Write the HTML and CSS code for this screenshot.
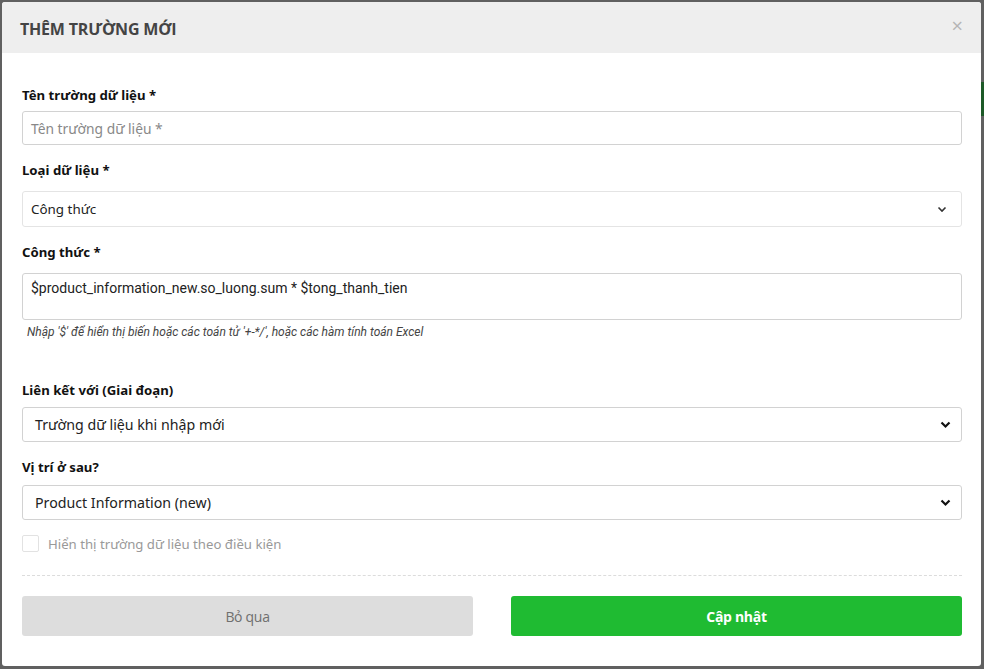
FILE: index.html
```html
<!DOCTYPE html>
<html lang="vi">
<head>
<meta charset="utf-8">
<link rel="stylesheet" href="styles.css">
</head>
<body>
<div class="backdrop-accent"></div>
<div class="modal">
  <div class="modal-header">
    <h1 class="modal-title">THÊM TRƯỜNG MỚI</h1>
    <span class="close">×</span>
  </div>
  <div class="modal-body">
    <div class="field">
      <label class="label label-first">Tên trường dữ liệu *</label>
      <div class="input placeholder">Tên trường dữ liệu *</div>
    </div>
    <div class="field">
      <label class="label">Loại dữ liệu *</label>
      <div class="input select-soft">
        <span>Công thức</span>
        <svg class="chev-soft" width="10" height="7" viewBox="0 0 10 7"><path d="M1.5 1.5 L5 5 L8.5 1.5" fill="none" stroke="#333" stroke-width="1.6"/></svg>
      </div>
    </div>
    <div class="field">
      <label class="label">Công thức *</label>
      <div class="input textarea">$product_information_new.so_luong.sum * $tong_thanh_tien</div>
      <p class="hint">Nhập '$' để hiển thị biến hoặc các toán tử '+-*/', hoặc các hàm tính toán Excel</p>
    </div>
    <div class="field field-gap">
      <label class="label">Liên kết với (Giai đoạn)</label>
      <div class="input select-native">
        <span>Trường dữ liệu khi nhập mới</span>
        <svg class="chev" width="11" height="8" viewBox="0 0 11 8"><path d="M1.5 1.5 L5.5 5.5 L9.5 1.5" fill="none" stroke="#111" stroke-width="2.2"/></svg>
      </div>
    </div>
    <div class="field">
      <label class="label label-pos">Vị trí ở sau?</label>
      <div class="input select-native">
        <span>Product Information (new)</span>
        <svg class="chev" width="11" height="8" viewBox="0 0 11 8"><path d="M1.5 1.5 L5.5 5.5 L9.5 1.5" fill="none" stroke="#111" stroke-width="2.2"/></svg>
      </div>
    </div>
    <div class="check-row">
      <span class="checkbox"></span>
      <span class="check-label">Hiển thị trường dữ liệu theo điều kiện</span>
    </div>
    <div class="divider"></div>
    <div class="actions">
      <button class="btn btn-cancel">Bỏ qua</button>
      <button class="btn btn-primary">Cập nhật</button>
    </div>
  </div>
</div>
</body>
</html>
```
FILE: styles.css
```css
* { box-sizing: border-box; }
html, body { margin: 0; padding: 0; }
body {
  width: 984px;
  height: 669px;
  background: #606060;
  padding: 2px 3px 3px 2px;
  position: relative;
  overflow: hidden;
  font-family: "Noto Sans", "Open Sans", sans-serif;
}
.backdrop-accent {
  position: absolute;
  right: 0;
  top: 82px;
  width: 3px;
  height: 34px;
  background: #1d5a28;
}
.modal {
  width: 979px;
  height: 664px;
  background: #fff;
  border-radius: 3px;
  overflow: hidden;
  display: flex;
  flex-direction: column;
}
.modal-header {
  height: 51px;
  flex: none;
  background: #eeeeee;
  display: flex;
  align-items: center;
  justify-content: space-between;
  padding: 0 18px 0 18px;
}
.modal-title {
  margin: 0;
  font-family: "Open Sans", sans-serif;
  font-weight: 700;
  font-size: 16px;
  color: #444;
  letter-spacing: -0.2px;
  padding-top: 2px;
}
.close {
  font-family: "Open Sans", sans-serif;
  font-size: 20px;
  color: #b5b5b5;
  line-height: 1;
  margin-top: -4px;
}
.modal-body {
  padding: 32px 19px 30px 20px;
  display: flex;
  flex-direction: column;
}
.field { display: flex; flex-direction: column; margin-bottom: 15px; }
.field-gap { margin-top: 25px; }
.label {
  font-family: "Noto Sans", sans-serif;
  font-weight: 700;
  font-size: 13.2px;
  line-height: 20px;
  height: 20px;
  color: #111;
  margin-bottom: 7px;
}
.label-first { margin-bottom: 6px; }
.label-pos { margin-bottom: 8px; }
.input {
  height: 34px;
  flex: none;
  border: 1px solid #d2d2d2;
  border-radius: 3px;
  display: flex;
  align-items: center;
  padding: 0 8px;
  font-family: "Noto Sans", sans-serif;
  font-size: 14px;
  color: #222;
}
.placeholder { color: #888; font-size: 13.8px; }
.select-soft {
  height: 36px;
  border-color: #e4e4e4;
  justify-content: space-between;
  margin-top: 4px;
  padding-right: 14px;
  font-size: 13.4px;
}
.textarea {
  height: 47px;
  align-items: flex-start;
  padding-top: 6px;
  margin-top: 4px;
  font-family: Roboto, sans-serif;
  font-size: 14px;
  color: #222;
}
.hint {
  margin: 4px 0 0 5px;
  font-family: Roboto, sans-serif;
  font-style: italic;
  font-size: 12px;
  line-height: 16px;
  height: 16px;
  color: #444;
}
.select-native {
  height: 35px;
  padding: 0 10px 0 12px;
  justify-content: space-between;
  font-size: 14.2px;
  color: #222;
}
.check-row {
  display: flex;
  align-items: center;
  gap: 9px;
  height: 17px;
}
.checkbox {
  width: 17px;
  height: 17px;
  border: 1px solid #e2e2e2;
  border-radius: 2px;
}
.check-label {
  font-family: "Noto Sans", sans-serif;
  font-size: 13.2px;
  color: #999;
}
.divider {
  border-top: 1px dashed #dcdcdc;
  margin-top: 23px;
}
.actions {
  display: flex;
  justify-content: space-between;
  margin-top: 20px;
}
.btn {
  width: 451px;
  height: 40px;
  border: none;
  border-radius: 3px;
  font-family: "Open Sans", sans-serif;
  font-size: 14px;
  letter-spacing: -0.3px;
}
.btn-cancel { background: #dddddd; color: #6f6f6f; }
.btn-primary { background: #1fbb32; color: #fff; font-weight: 700; }
```
